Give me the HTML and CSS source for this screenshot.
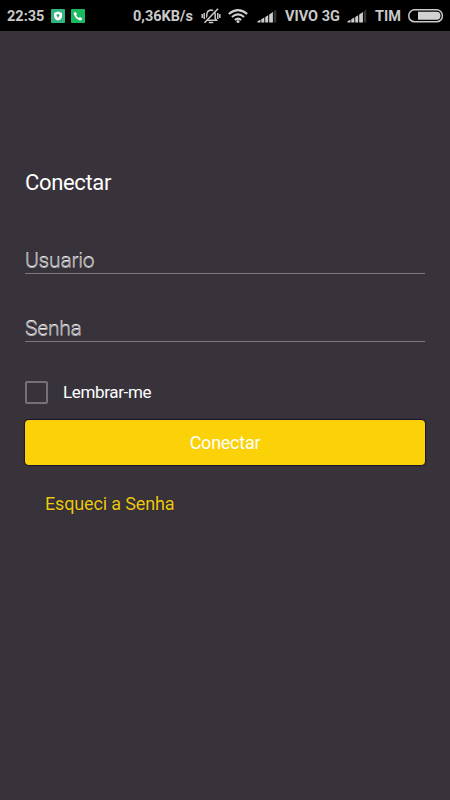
FILE: index.html
```html
<!DOCTYPE html>
<html lang="pt-BR">
<head>
<meta charset="utf-8">
<title>Conectar</title>
<link rel="stylesheet" href="styles.css">
</head>
<body>
<header class="status">
  <span class="time">22:35</span>
  <svg class="app" viewBox="0 0 14 14"><rect width="14" height="14" rx="1" fill="#32b580"/><path d="M7 2.600 11 4v3.200C11 9.300 9.200 10.800 7 11.600 4.800 10.800 3 9.300 3 7.200V4z" fill="#fff"/><path d="M7 4.700 9 6.700H7.700V8.600H6.300V6.700H5z" fill="#279b6c"/></svg>
  <svg class="app phone" viewBox="0 0 14 14"><rect width="14" height="14" rx="1" fill="#18b960"/><path d="M3 3.500 4.600 2.900 6 5.200 5.100 6.200Q6 8 7.900 8.900L8.900 8 11.200 9.500 10.600 11.100Q9.600 11.800 7.800 10.900 4 9.200 3 5.800 2.500 4.300 3 3.500z" fill="#fff"/></svg>
  <span class="rate">0,36KB/s</span>
  <svg class="bell" viewBox="0 0 20 16" fill="none" stroke="#c9c9c9"><path d="M4.500 12.300H15.500L14.200 10.500V6.500Q14 2.500 10 2 6 2.500 5.800 6.500V10.500zM7.800 14.500H12.200" stroke-width="1.500"/><path d="M3.200 5V11M1.200 6V10M16.800 5V11M18.800 6V10" stroke-width="1.500"/><path d="M3.100 14 15.600 .8" stroke="#000" stroke-width="2.500"/><path d="M3.500 14.800 17 .8" stroke-width="1.600"/></svg>
  <svg class="wifi" viewBox="0 0 20 16" fill="none" stroke="#cfcfcf" stroke-width="2"><path d="M.8 6Q10-1.800 19.200 6M3.900 9Q10 3.800 16.100 9M6.800 12Q10 9.300 13.200 12"/><circle cx="10" cy="13.500" r="1.500" fill="#cfcfcf" stroke="none"/></svg>
  <svg class="signal s1" viewBox="0 0 20 14"><path d="M.5 12.200 3.500 10.700V13.500H.5zM4.300 10.300 7.300 8.500V13.500H4.300zM8.200 8 11.200 6.200V13.500H8.200zM12.200 5.500 15.900 3V13.500H12.200z" fill="#cecece"/><path d="M16.700 2.500 19.300.4V13.500H16.700z" fill="#333"/></svg>
  <span class="vivo">VIVO 3G</span>
  <svg class="signal s2" viewBox="0 0 20 14"><path d="M.5 12.200 3.500 10.700V13.500H.5zM4.300 10.300 7.300 8.500V13.500H4.300zM8.200 8 11.200 6.200V13.500H8.200zM12.200 5.500 15.900 3V13.500H12.200z" fill="#cecece"/><path d="M16.700 2.500 19.300.4V13.500H16.700z" fill="#333"/></svg>
  <span class="tim">TIM</span>
  <svg class="battery" viewBox="0 0 36 14"><rect x=".8" y=".8" width="33.600" height="12" rx="5.800" fill="none" stroke="#cacaca" stroke-width="1.500"/><path d="M10 2.800H28.500Q32.500 3 32.500 6.800T28.500 10.800H10z" fill="#d2d2d2"/></svg>
</header>
<main class="login">
  <h1 class="title">Conectar</h1>
  <div class="field user"><span class="hint">Usuario</span></div>
  <div class="field pass"><span class="hint">Senha</span></div>
  <label class="remember"><span class="box"></span><span class="remember-text">Lembrar-me</span></label>
  <button class="submit">Conectar</button>
  <a class="forgot">Esqueci a Senha</a>
</main>
</body>
</html>
```

FILE: styles.css
```css
* { box-sizing: border-box; }
body { margin: 0; width: 450px; height: 800px; overflow: hidden; background: #38333a; color: #fff; font-family: Roboto, sans-serif; }
.status { height: 31px; display: flex; align-items: center; padding: 1px 0 0 7px; background: #000; color: #c9c9c9; font-weight: 700; font-size: 14.5px; line-height: 18px; white-space: nowrap; }
.status span { padding-top: 2px; }
.status svg { flex: none; }
.time { width: 44px; }
.app { width: 14px; height: 14px; }
.phone { margin-left: 6px; }
.rate { width: 68px; margin-left: 48px; }
.bell { width: 20px; height: 16px; }
.wifi { width: 20px; height: 16px; margin-left: 7px; }
.signal { width: 20px; height: 14px; }
.s1 { margin-left: 9px; }
.vivo { width: 55px; margin-left: 8px; }
.s2 { margin-left: 7px; }
.tim { width: 26px; margin-left: 8px; }
.battery { width: 36px; height: 14px; margin-left: 7px; }
.login { display: flex; flex-direction: column; padding: 137px 25px 0; }
.title { margin: 0; height: 30px; font-weight: 400; font-size: 22px; line-height: 30px; letter-spacing: -0.35px; }
.field { height: 28px; border-bottom: 1px solid #7c797d; display: flex; }
.user { margin-top: 48px; }
.pass { margin-top: 40px; }
.hint { padding-top: 1px; font-size: 21px; line-height: 28px; font-weight: 300; letter-spacing: -0.2px; color: #a8a6a9; text-shadow: 0 -0.6px 0 #eee; }
.remember { display: flex; align-items: center; margin-top: 39px; height: 23px; }
.box { width: 23px; height: 23px; border: 2px solid #757174; border-radius: 2px; }
.remember-text { margin-left: 15px; font-size: 17px; line-height: 23px; letter-spacing: -0.35px; }
.submit { margin: 16px 0 0; height: 45px; border: 0; border-radius: 4px; padding: 0; background: #fbd107; box-shadow: 0 0 1px 1px #19132a; color: #fff; font: 400 18px/45px Roboto, sans-serif; letter-spacing: -0.25px; }
.forgot { align-self: flex-start; margin: 27px 0 0 20px; color: #edc911; font-size: 18px; line-height: 24px; letter-spacing: -0.15px; text-shadow: 0 0 1px #17132a; }
```
